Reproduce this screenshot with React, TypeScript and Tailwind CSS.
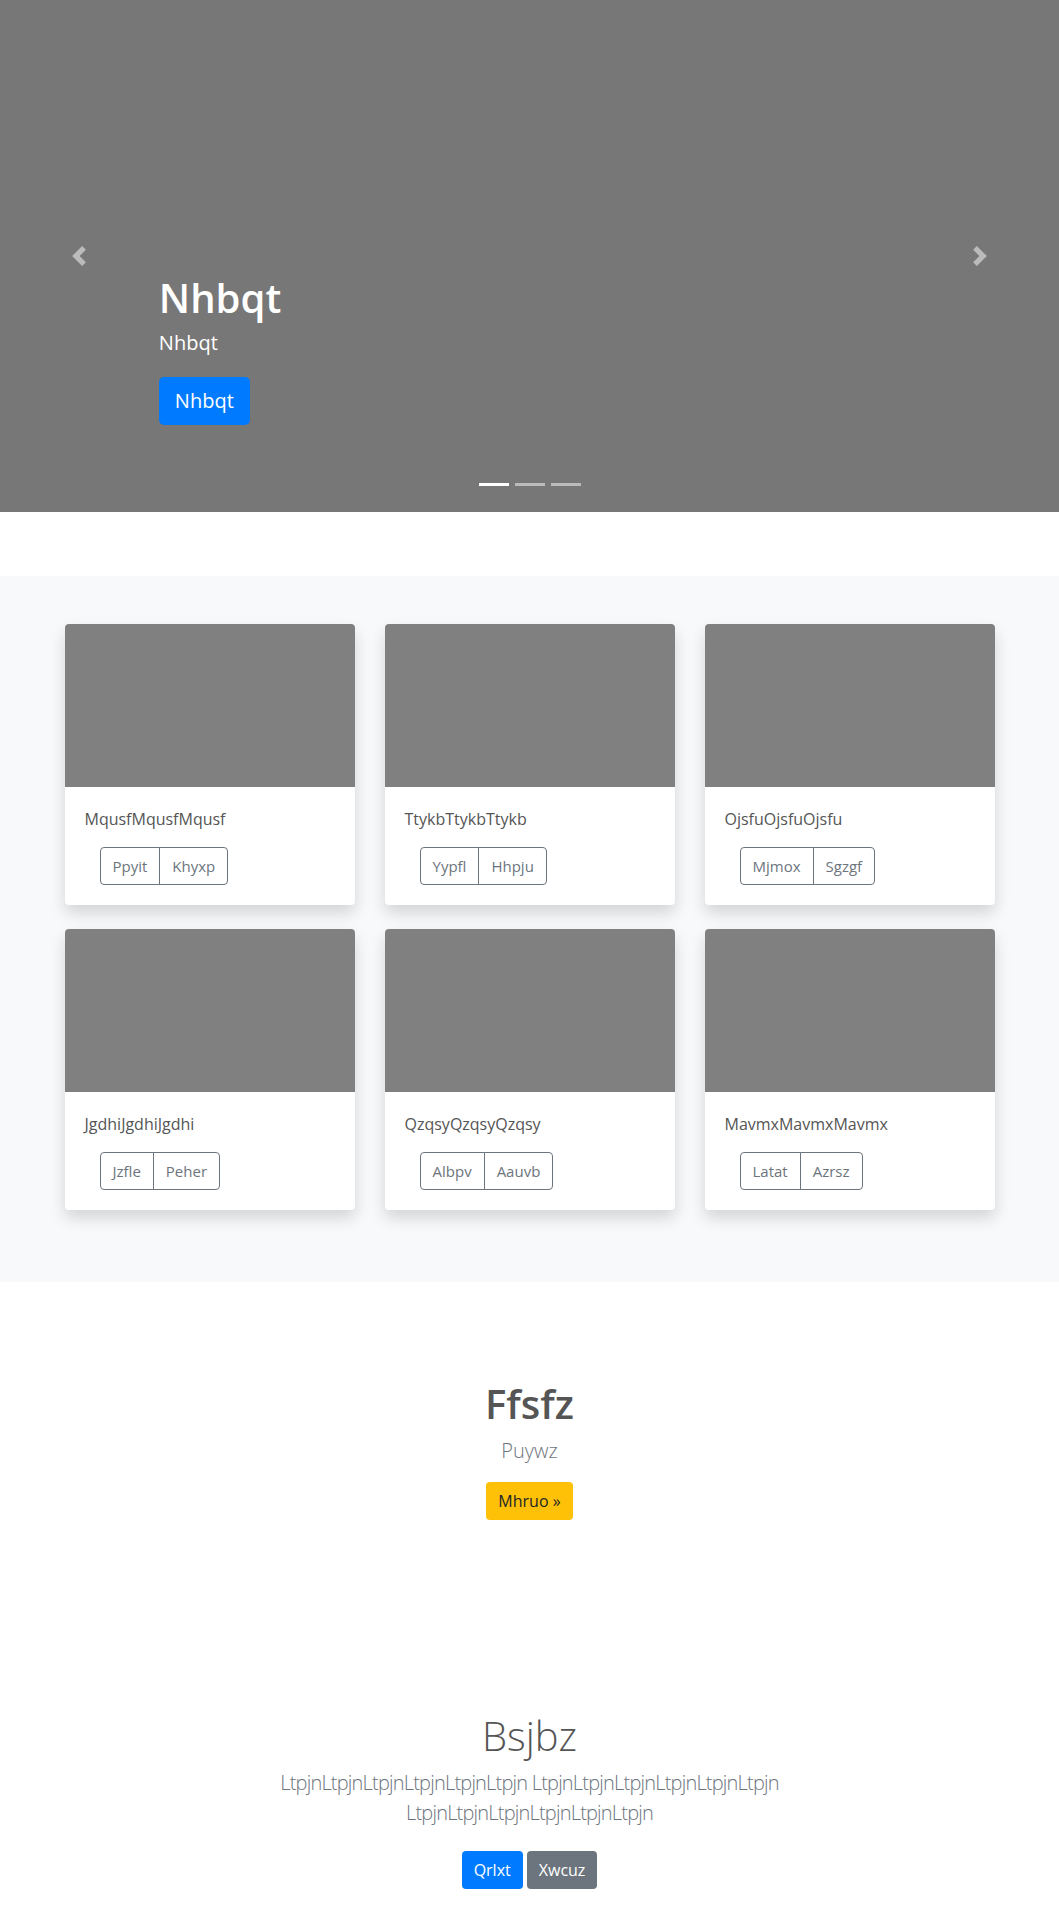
import React from 'react';

const cards = [
  { text: 'MqusfMqusfMqusf', left: 'Ppyit', right: 'Khyxp' },
  { text: 'TtykbTtykbTtykb', left: 'Yypfl', right: 'Hhpju' },
  { text: 'OjsfuOjsfuOjsfu', left: 'Mjmox', right: 'Sgzgf' },
  { text: 'JgdhiJgdhiJgdhi', left: 'Jzfle', right: 'Peher' },
  { text: 'QzqsyQzqsyQzqsy', left: 'Albpv', right: 'Aauvb' },
  { text: 'MavmxMavmxMavmx', left: 'Latat', right: 'Azrsz' },
];

const Chevron = ({ dir }: { dir: 'prev' | 'next' }) => (
  <svg width="20" height="20" viewBox="0 0 8 8" className="opacity-50" fill="#fff">
    {dir === 'prev' ? (
      <path d="M5.25 0l-4 4 4 4 1.5-1.5L4.25 4l2.5-2.5L5.25 0z" />
    ) : (
      <path d="M2.75 0l-1.5 1.5L3.75 4l-2.5 2.5L2.75 8l4-4-4-4z" />
    )}
  </svg>
);

const Hero = () => (
  <div className="relative h-[512px] bg-[#777] flex flex-col">
    <div className="pl-[15%] pt-[274px] text-white">
      <h1 className="text-[40px] leading-[48px] font-semibold mb-[6px]">Nhbqt</h1>
      <p className="text-[20px] leading-[30px] mb-[19px]">Nhbqt</p>
      <a className="inline-flex items-center h-[48px] px-4 rounded-[5px] bg-[#007bff] text-[20px] text-white">
        Nhbqt
      </a>
    </div>
    <div className="mt-auto mb-[26px] flex justify-center gap-[6px]">
      <span className="w-[30px] h-[3px] bg-white" />
      <span className="w-[30px] h-[3px] bg-white/50" />
      <span className="w-[30px] h-[3px] bg-white/50" />
    </div>
    {/* carousel controls */}
    <div className="absolute left-0 top-0 bottom-0 w-[15%] flex items-center justify-center">
      <Chevron dir="prev" />
    </div>
    <div className="absolute right-0 top-0 bottom-0 w-[15%] flex items-center justify-center">
      <Chevron dir="next" />
    </div>
  </div>
);

const Card = ({ text, left, right }: { text: string; left: string; right: string }) => (
  <div className="bg-white rounded-[4px] overflow-hidden shadow-[0_0.5rem_1rem_rgba(0,0,0,0.15)]">
    <div className="h-[163px] bg-[#808080]" />
    <div className="p-5">
      <p className="text-[16px] leading-6 text-[#555] mb-4">{text}</p>
      <div className="flex ml-[15px]">
        <button className="h-[38px] px-3 text-[15px] text-[#6c757d] border border-[#6c757d] rounded-l-[4px]">
          {left}
        </button>
        <button className="h-[38px] px-3 text-[15px] text-[#6c757d] border border-[#6c757d] -ml-px rounded-r-[4px]">
          {right}
        </button>
      </div>
    </div>
  </div>
);

export default function App() {
  return (
    <div className="font-['Open_Sans',sans-serif] bg-white min-h-screen">
      <Hero />

      <section className="mt-16 bg-[#f8f9fa] pt-12 pb-[48px]">
        <div className="max-w-[960px] mx-auto px-[15px] grid grid-cols-3 gap-x-[30px] gap-y-6 pb-6">
          {cards.map((c) => (
            <Card key={c.text} {...c} />
          ))}
        </div>
      </section>

      <section className="pt-[98px] text-center">
        <h1 className="text-[40px] leading-[48px] font-semibold text-[#555] mb-2">Ffsfz</h1>
        <p className="text-[20px] leading-[30px] font-light text-[#6c757d] mb-4">Puywz</p>
        <a className="inline-flex items-center h-[38px] px-3 rounded-[4px] bg-[#ffc107] text-[16px] text-[#212529]">
          Mhruo »
        </a>
      </section>

      <section className="pt-[192px] pb-[30px] text-center">
        <h1 className="text-[40px] leading-[48px] font-light text-[#555] mb-2">Bsjbz</h1>
        <p className="max-w-[600px] mx-auto text-[20px] leading-[30px] font-light tracking-[-0.8px] text-[#6c757d] mb-[23px]">
          LtpjnLtpjnLtpjnLtpjnLtpjnLtpjn LtpjnLtpjnLtpjnLtpjnLtpjnLtpjn LtpjnLtpjnLtpjnLtpjnLtpjnLtpjn
        </p>
        <div className="flex justify-center gap-1">
          <a className="inline-flex items-center h-[38px] px-3 rounded-[4px] bg-[#007bff] text-[16px] text-white">
            Qrlxt
          </a>
          <a className="inline-flex items-center h-[38px] px-3 rounded-[4px] bg-[#6c757d] text-[16px] text-white">
            Xwcuz
          </a>
        </div>
      </section>
    </div>
  );
}
